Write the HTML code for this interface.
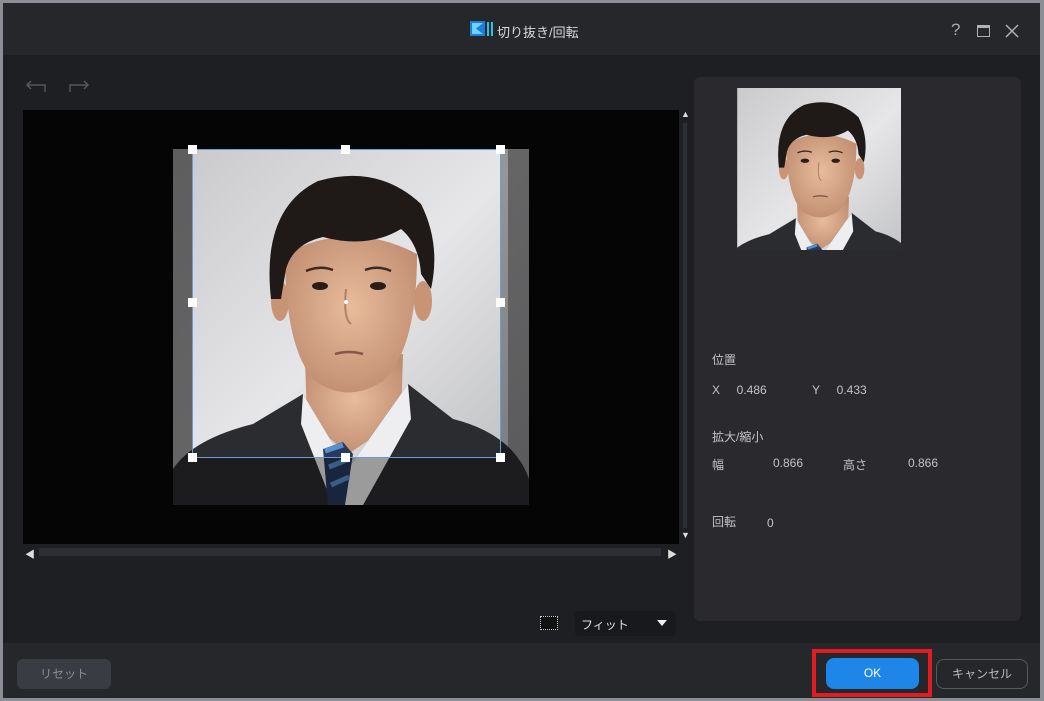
<!DOCTYPE html>
<html><head><meta charset="utf-8"><style>
*{margin:0;padding:0;box-sizing:border-box}
body{width:1044px;height:701px;background:#8b8e94;position:relative;overflow:hidden;font-family:"Liberation Sans","Noto Sans CJK JP",sans-serif;color:#c8c9cc}
.win{position:absolute;left:3px;top:3px;width:1037px;height:695px;background:#1e1f23}
.title{position:absolute;left:0;top:0;width:1037px;height:52px;background:#26272b}
.foot{position:absolute;left:0;top:640px;width:1037px;height:55px;background:#26272b}
.a{position:absolute;white-space:nowrap}
.t{font-size:12px;color:#c3c4c8}
</style></head><body>
<svg width="0" height="0" style="position:absolute"><defs>
<linearGradient id="bg" x1="0" y1="0" x2="1" y2="1"><stop offset="0" stop-color="#c9c9cc"/><stop offset="0.5" stop-color="#e6e6e8"/><stop offset="1" stop-color="#b9babd"/></linearGradient>
<radialGradient id="sk" cx="0.5" cy="0.45" r="0.6"><stop offset="0" stop-color="#e8bc9c"/><stop offset="1" stop-color="#c08c70"/></radialGradient>
<g id="p">
<rect width="356" height="356" fill="url(#bg)"/>
<rect x="0" y="0" width="20" height="356" fill="#6a6a6d" opacity=".6"/>
<rect x="335" y="0" width="21" height="356" fill="#6a6a6d" opacity=".6"/>
<path d="M132 210 L134 270 L175 305 L228 270 L230 205 Z" fill="url(#sk)"/>
<path d="M0 320 Q20 290 80 275 L130 245 L175 320 L235 235 L280 270 Q340 285 356 330 L356 356 L0 356 Z" fill="#2b2c2f"/>
<path d="M130 245 L175 320 L235 235 L238 270 L190 356 L160 356 L128 275 Z" fill="#eeeef0"/>
<path d="M150 300 L170 293 L180 305 L172 356 L155 356 Z" fill="#273a5e"/>
<path d="M152 302 L170 296 M156 318 L176 310 M158 336 L176 328" stroke="#5a8fcf" stroke-width="5"/>
<ellipse cx="107" cy="152" rx="9" ry="20" fill="#c99474"/>
<ellipse cx="250" cy="152" rx="9" ry="20" fill="#c99474"/>
<path d="M112 105 Q112 200 142 232 Q175 255 210 232 Q244 200 244 105 Q178 70 112 105 Z" fill="url(#sk)"/>
<path d="M98 150 Q88 60 145 32 Q205 15 248 55 Q268 95 258 140 L248 125 Q246 95 228 80 Q195 100 150 88 Q120 95 113 120 L108 150 Z" fill="#1f1a17"/>
<ellipse cx="147" cy="137" rx="8" ry="4" fill="#2a1d16"/>
<ellipse cx="205" cy="137" rx="8" ry="4" fill="#2a1d16"/>
<path d="M133 122 Q147 116 160 121 M192 121 Q205 116 218 122" stroke="#3a2a24" stroke-width="2.5" fill="none"/>
<path d="M173 140 Q170 170 178 175" stroke="#b07f65" stroke-width="2" fill="none"/>
<path d="M162 205 Q176 201 190 205" stroke="#8a5548" stroke-width="2.5" fill="none"/>
</g></defs></svg>
<div class="win">
<div class="title">
<svg class="a" style="left:467px;top:18px" width="26" height="16"><rect width="15" height="15" fill="#1b7fd6"/><path d="M2 2 L13 2 L6 7.5 L13 13 L2 13 Z" fill="#6fd0ff"/><rect x="17" y="1" width="2" height="14" fill="#29c2e8"/><rect x="21" y="1" width="2" height="14" fill="#29c2e8"/></svg>
<div class="a" style="left:494px;top:19px;font-size:13px;color:#d8d9dc">切り抜き/回転</div>
<div class="a" style="left:948px;top:17px;font-size:17px;color:#a8aaae">?</div>
<div class="a" style="left:974px;top:22px;width:13px;height:12px;border:1.5px solid #b0b2b6;border-top-width:3px"></div>
<svg class="a" style="left:1002px;top:21px" width="14" height="14"><path d="M1 1L13 13M13 1L1 13" stroke="#b0b2b6" stroke-width="1.5"/></svg>
</div>
<svg class="a" style="left:22px;top:76px" width="24" height="14"><path d="M6 2 L2 6 L6 10 M2 6 L20 6 L20 13" stroke="#55575c" stroke-width="1.5" fill="none"/></svg>
<svg class="a" style="left:64px;top:76px" width="24" height="14"><path d="M17 2 L21 6 L17 10 M21 6 L3 6 L3 13" stroke="#55575c" stroke-width="1.5" fill="none"/></svg>
<div class="a" style="left:20px;top:107px;width:656px;height:434px;background:#050506"></div>
<svg class="a" style="left:170px;top:146px" width="356" height="356"><use href="#p"/>
<path d="M0 308 L356 308 L356 356 L0 356 Z M0 0 L19 0 L19 308 L0 308 Z M328 0 L356 0 L356 308 L328 308 Z" fill="#000" opacity=".35"/></svg>
<div class="a" style="left:189px;top:146px;width:309px;height:309px;border:1px solid #6b9bd8"></div>
<div class="a" style="left:185px;top:142px;width:9px;height:9px;background:#fff"></div>
<div class="a" style="left:338px;top:142px;width:9px;height:9px;background:#fff"></div>
<div class="a" style="left:493px;top:142px;width:9px;height:9px;background:#fff"></div>
<div class="a" style="left:185px;top:295px;width:9px;height:9px;background:#fff"></div>
<div class="a" style="left:493px;top:295px;width:9px;height:9px;background:#fff"></div>
<div class="a" style="left:185px;top:450px;width:9px;height:9px;background:#fff"></div>
<div class="a" style="left:338px;top:450px;width:9px;height:9px;background:#fff"></div>
<div class="a" style="left:493px;top:450px;width:9px;height:9px;background:#fff"></div>
<div class="a" style="left:341px;top:297px;width:4px;height:4px;background:#fff;border-radius:50%"></div>
<div class="a" style="left:680px;top:120px;width:4px;height:405px;background:#2d2e33"></div>
<div class="a" style="left:678px;top:106px;font-size:9px;color:#ddd">▲</div>
<div class="a" style="left:678px;top:527px;font-size:9px;color:#ddd">▼</div>
<div class="a" style="left:36px;top:545px;width:622px;height:8px;background:#2d2e33"></div>
<div class="a" style="left:22px;top:543px;font-size:10px;color:#ddd">◀</div>
<div class="a" style="left:664px;top:543px;font-size:10px;color:#ddd">▶</div>
<div class="a" style="left:537px;top:613px;width:18px;height:14px;border:1px dotted #ccc;background:#111"></div>
<div class="a" style="left:572px;top:608px;width:101px;height:25px;background:#18191c;border-radius:4px"></div>
<div class="a t" style="left:578px;top:613px;color:#e0e0e0">フィット</div>
<svg class="a" style="left:654px;top:617px" width="10" height="6"><path d="M0 0L10 0L5 6Z" fill="#eee"/></svg>
<div class="a" style="left:691px;top:74px;width:327px;height:544px;background:#29292e;border-radius:6px"></div>
<svg class="a" style="left:734px;top:85px" width="164" height="162" viewBox="19 0 309 305" preserveAspectRatio="none"><use href="#p"/></svg>
<div class="a t" style="left:709px;top:348px">位置</div>
<div class="a t" style="left:709px;top:380px">X&nbsp;&nbsp;&nbsp;&nbsp;&nbsp;0.486</div>
<div class="a t" style="left:809px;top:380px">Y&nbsp;&nbsp;&nbsp;&nbsp;&nbsp;0.433</div>
<div class="a t" style="left:709px;top:425px">拡大/縮小</div>
<div class="a t" style="left:709px;top:453px">幅</div>
<div class="a t" style="left:770px;top:453px">0.866</div>
<div class="a t" style="left:840px;top:453px">高さ</div>
<div class="a t" style="left:905px;top:453px">0.866</div>
<div class="a t" style="left:709px;top:510px">回転</div>
<div class="a t" style="left:764px;top:513px">0</div>
<div class="foot">
<div class="a" style="left:14px;top:16px;width:94px;height:30px;background:#3a3c43;border-radius:6px;text-align:center;line-height:30px;font-size:12px;color:#8d8f95">リセット</div>
<div class="a" style="left:809px;top:6px;width:120px;height:48px;border:4px solid #e31b23"></div>
<div class="a" style="left:823px;top:15px;width:93px;height:31px;background:#1e86e8;border-radius:8px;text-align:center;line-height:31px;font-size:12px;color:#fff">OK</div>
<div class="a" style="left:933px;top:16px;width:92px;height:30px;border:1px solid #56585e;border-radius:8px;text-align:center;line-height:28px;font-size:12px;color:#b8babe">キャンセル</div>
</div>
</div>
</body></html>
